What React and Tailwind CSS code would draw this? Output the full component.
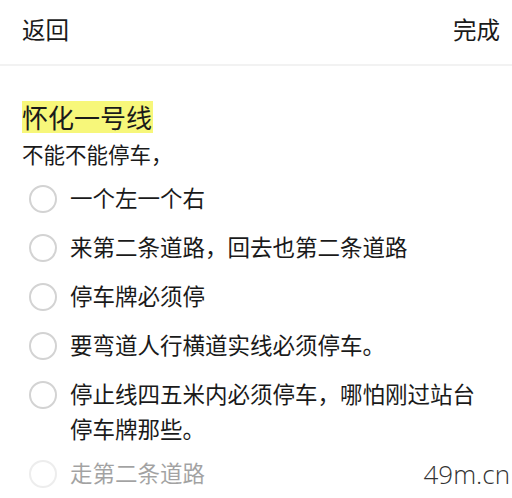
import React from 'react';

const options = [
  { text: '一个左一个右' },
  { text: '来第二条道路，回去也第二条道路' },
  { text: '停车牌必须停' },
  { text: '要弯道人行横道实线必须停车。' },
  { text: '停止线四五米内必须停车，哪怕刚过站台停车牌那些。' },
  { text: '走第二条道路', faded: true },
];

const font = { fontFamily: '"Noto Sans CJK SC", "Noto Sans", sans-serif' };

export default function App() {
  return (
    <div className="relative w-[512px] h-[498px] overflow-hidden bg-white text-[#1a1a1a]" style={font}>
      {/* 상단 바 */}
      <div className="flex items-center justify-between h-[66px] pl-[22px] pr-[12px] pb-[4px] border-b-2 border-[#f2f2f2]">
        <span className="text-[23.5px]">返回</span>
        <span className="text-[23.5px]">完成</span>
      </div>

      <div className="px-[22px] pt-[35px]">
        <div className="inline-block bg-[#f7f77a] text-[26px] leading-[32px] pr-[1px]">怀化一号线</div>
        <div className="text-[21.5px] leading-[30px] mt-[6px]">不能不能停车，</div>

        <div className="mt-[12px] pl-[7px] flex flex-col gap-[15px]">
          {options.map((o, i) => (
            <div
              key={i}
              className={`flex items-start gap-[13px] ${o.faded ? 'opacity-40 -mt-[5px]' : ''}`}
            >
              <div className="mt-[3.5px] w-[28px] h-[28px] shrink-0 rounded-full border-2 border-[#d3d3d3]" />
              <div className="text-[22.5px] leading-[35px] -mt-[1px] w-[415px]">{o.text}</div>
            </div>
          ))}
        </div>
      </div>

      <div
        className="absolute right-[2px] bottom-[4px] text-[26px] text-[#333] font-light"
        style={{ fontFamily: '"Open Sans", sans-serif' }}
      >
        49m.cn
      </div>
    </div>
  );
}
